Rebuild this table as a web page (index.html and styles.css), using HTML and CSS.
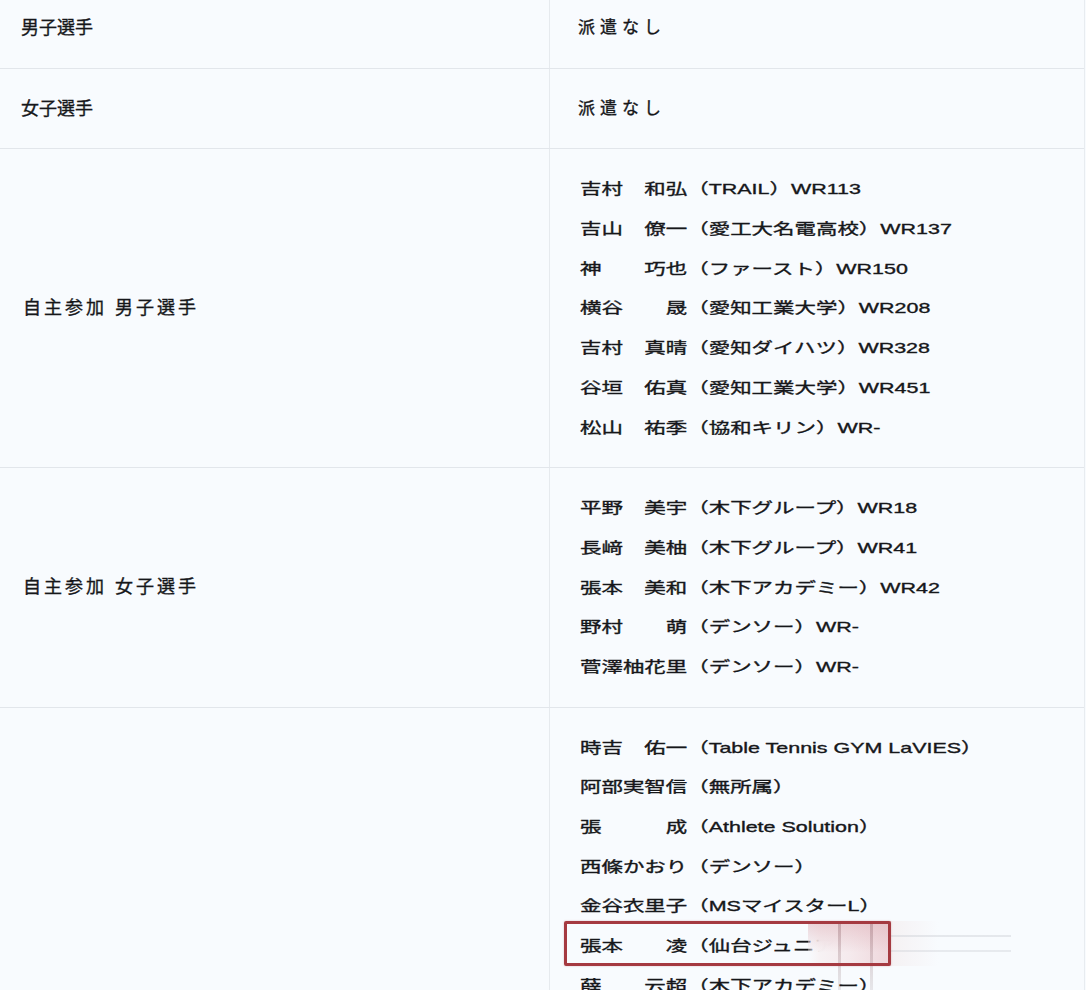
FILE: index.html
```html
<!DOCTYPE html>
<html lang="ja">
<head>
<meta charset="utf-8">
<title>派遣選手一覧</title>
<link rel="stylesheet" href="styles.css">
</head>
<body>
<div class="table">
  <div class="row">
    <div class="label"><span class="lt">男子選手</span></div>
    <div class="value"><div class="line top"><span class="tt">派遣なし</span></div></div>
  </div>
  <div class="row">
    <div class="label"><span class="lt">女子選手</span></div>
    <div class="value"><div class="line top"><span class="tt">派遣なし</span></div></div>
  </div>
  <div class="row">
    <div class="label"><span class="lt wide">自主参加 男子選手</span></div>
    <div class="value">
      <div class="line"><span class="t">吉村　和弘（TRAIL）WR113</span></div>
      <div class="line"><span class="t">吉山　僚一（愛工大名電高校）WR137</span></div>
      <div class="line"><span class="t">神　　巧也（ファースト）WR150</span></div>
      <div class="line"><span class="t">横谷　　晟（愛知工業大学）WR208</span></div>
      <div class="line"><span class="t">吉村　真晴（愛知ダイハツ）WR328</span></div>
      <div class="line"><span class="t">谷垣　佑真（愛知工業大学）WR451</span></div>
      <div class="line"><span class="t">松山　祐季（協和キリン）WR-</span></div>
    </div>
  </div>
  <div class="row">
    <div class="label"><span class="lt wide">自主参加 女子選手</span></div>
    <div class="value">
      <div class="line"><span class="t">平野　美宇（木下グループ）WR18</span></div>
      <div class="line"><span class="t">長﨑　美柚（木下グループ）WR41</span></div>
      <div class="line"><span class="t">張本　美和（木下アカデミー）WR42</span></div>
      <div class="line"><span class="t">野村　　萌（デンソー）WR-</span></div>
      <div class="line"><span class="t">菅澤柚花里（デンソー）WR-</span></div>
    </div>
  </div>
  <div class="row">
    <div class="label"></div>
    <div class="value">
      <div class="line"><span class="t">時吉　佑一（Table Tennis GYM LaVIES）</span></div>
      <div class="line"><span class="t">阿部実智信（無所属）</span></div>
      <div class="line"><span class="t">張　　　成（Athlete Solution）</span></div>
      <div class="line"><span class="t">西條かおり（デンソー）</span></div>
      <div class="line"><span class="t">金谷衣里子（MSマイスターL）</span></div>
      <div class="line marked">
        <span class="t">張本　　凌（仙台ジュニアクラブ）</span>
        <div class="smudge-a"></div>
        <div class="smudge-b"></div>
        <div class="streak s1"></div>
        <div class="streak s2"></div>
        <div class="mark"></div>
      </div>
      <div class="line"><span class="t">薛　　云超（木下アカデミー）</span></div>
    </div>
  </div>
</div>
</body>
</html>
```

FILE: styles.css
```css
html, body {
  margin: 0;
  padding: 0;
  overflow: hidden;
  background: #f8fbfe;
}

body {
  font-family: "Liberation Sans", "Noto Sans CJK JP", sans-serif;
  color: #16171a;
  -webkit-text-stroke: 0.35px currentColor;
}

.table {
  margin-top: -12px;
  width: 1084px;
  border-right: 1px solid #e8ecf0;
}

.row {
  display: grid;
  grid-template-columns: 550px 1fr;
  border-bottom: 1px solid #e2e6eb;
}

.label {
  display: flex;
  align-items: center;
  padding-left: 21px;
  border-right: 1px solid #e6eaee;
  box-sizing: border-box;
}

.lt {
  font-size: 18px;
  line-height: 24px;
  white-space: nowrap;
}

.lt.wide {
  letter-spacing: 3px;
  margin-left: 2px;
}

.value {
  padding: 20px 0 20px 30px;
}

.line {
  position: relative;
  height: 39.7px;
  line-height: 39.7px;
  white-space: nowrap;
}

.tt {
  font-size: 17px;
  letter-spacing: 5px;
  margin-left: -2px;
}

.t {
  display: inline-block;
  font-size: 15px;
  transform: scaleX(1.43);
  transform-origin: 0 50%;
}

.mark {
  position: absolute;
  left: -16px;
  top: -5px;
  width: 327px;
  height: 45px;
  border: 3px solid #a53a41;
  border-radius: 2px;
  box-sizing: border-box;
  box-shadow: 0 0 2px rgba(165, 58, 65, 0.35);
}

.smudge-a {
  position: absolute;
  left: 228px;
  top: -5px;
  width: 83px;
  height: 45px;
  background:
    linear-gradient(to bottom, rgba(222, 176, 183, 0.55), rgba(248, 240, 242, 0) 70%),
    linear-gradient(to right, rgba(248, 251, 254, 0.3), rgba(247, 242, 244, 0.99) 14%, rgba(245, 234, 237, 1) 50%, rgba(238, 214, 219, 1));
}

.smudge-b {
  position: absolute;
  left: 311px;
  top: -5px;
  width: 120px;
  height: 45px;
  background:
    linear-gradient(to bottom, transparent 14px, rgba(205, 208, 214, 0.45) 14px, rgba(205, 208, 214, 0.45) 16px, transparent 16px, transparent 29px, rgba(205, 208, 214, 0.4) 29px, rgba(205, 208, 214, 0.4) 31px, transparent 31px),
    linear-gradient(to right, #f5f1f3, #f8fbfe 40%);
}

.streak {
  position: absolute;
  top: -5px;
  width: 3px;
  height: 70px;
  background: linear-gradient(to bottom, rgba(150, 105, 112, 0.4), rgba(170, 160, 165, 0.22));
}

.s1 { left: 258px; }
.s2 { left: 290px; }
```
